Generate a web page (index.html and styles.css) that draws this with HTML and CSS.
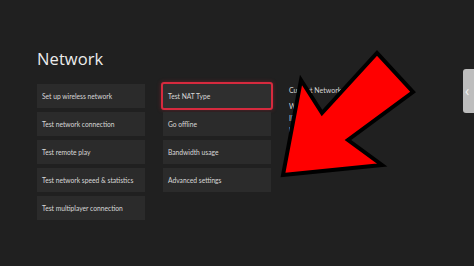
FILE: index.html
```html
<!DOCTYPE html>
<html>
<head>
<meta charset="utf-8">
<link rel="stylesheet" href="styles.css">
</head>
<body>
<div class="screen">
  <h1 class="title">Network</h1>
  <div class="columns">
    <div class="col">
      <div class="tile">Set up wireless network</div>
      <div class="tile">Test network connection</div>
      <div class="tile">Test remote play</div>
      <div class="tile">Test network speed &amp; statistics</div>
      <div class="tile">Test multiplayer connection</div>
    </div>
    <div class="col">
      <div class="tile focused">Test NAT Type</div>
      <div class="tile">Go offline</div>
      <div class="tile">Bandwidth usage</div>
      <div class="tile">Advanced settings</div>
    </div>
    <div class="status">
      <div class="status-head">Current Network Status</div>
      <div class="status-line first">Wired</div>
      <div class="status-line">IP address</div>
      <div class="status-line">NAT type</div>
    </div>
  </div>
  <div class="side-tab"><span class="chev">&#8249;</span></div>
  <svg class="arrow" width="474" height="266" viewBox="0 0 474 266">
    <polygon points="283,175 301,80 322,113 377,53 413,92 348,140 382,165" fill="#ff0000" stroke="#000" stroke-width="4" stroke-linejoin="miter"/>
  </svg>
</div>
</body>
</html>
```

FILE: styles.css
```css
html, body {
  margin: 0;
  padding: 0;
  width: 474px;
  height: 266px;
  overflow: hidden;
  background: #202020;
}
.screen {
  position: relative;
  width: 474px;
  height: 266px;
  box-sizing: border-box;
  padding: 48px 0 0 37px;
  font-family: "Open Sans", "Noto Sans", sans-serif;
  color: #dcdcdc;
}
.title {
  margin: 0;
  font-size: 16.5px;
  font-weight: 400;
  line-height: 22px;
  color: #ececec;
  letter-spacing: 0.1px;
}
.columns {
  display: flex;
  margin-top: 14px;
  gap: 18px;
}
.col {
  width: 108px;
  display: flex;
  flex-direction: column;
  gap: 4px;
}
.tile {
  height: 24px;
  background: #2b2b2b;
  display: flex;
  align-items: center;
  padding-left: 5px;
  font-family: "Lato", "Open Sans", sans-serif;
  font-size: 6.7px;
  color: #d8d8d8;
  white-space: nowrap;
}
.tile.focused {
  background: #2f2f2f;
  outline: 2px solid #d62a3e;
  box-shadow: 0 0 4px 2px rgba(220, 40, 60, 0.35);
  border-radius: 1px;
}
.status {
  font-family: "Lato", "Open Sans", sans-serif;
  font-size: 7px;
  color: #d8d8d8;
}
.status-head {
  margin-top: 2px;
  line-height: 8px;
}
.status-line {
  margin-top: 4px;
  line-height: 8px;
}
.status-line.first {
  margin-top: 8px;
}
.side-tab {
  position: absolute;
  left: 463px;
  top: 69px;
  width: 16px;
  height: 44px;
  border-radius: 3px;
  background: #bdbdbd;
  display: flex;
  align-items: center;
  padding-left: 2px;
  box-sizing: border-box;
}
.chev {
  color: #f2f2f2;
  font-size: 14px;
  line-height: 14px;
}
.arrow {
  position: absolute;
  left: 0;
  top: 0;
}
```
